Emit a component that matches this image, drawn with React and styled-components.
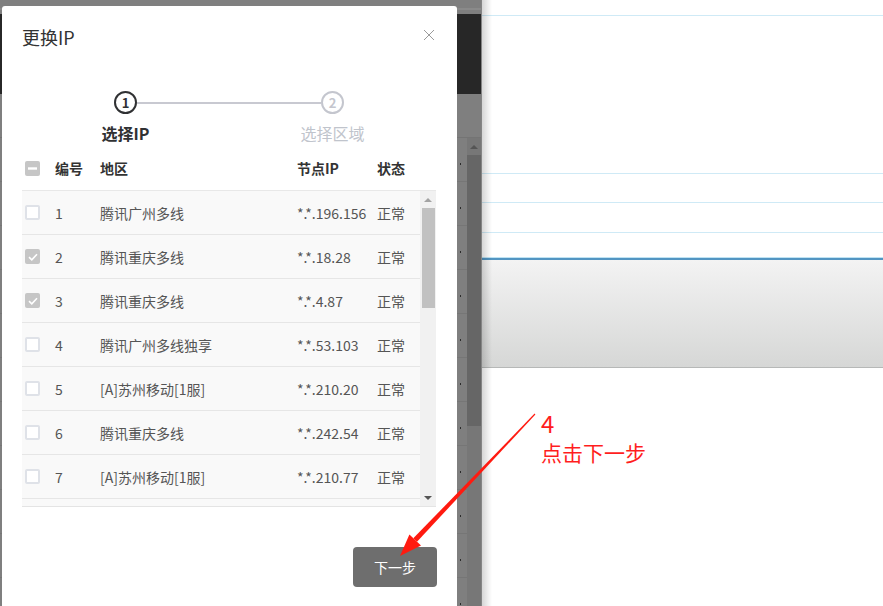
import React from "react";
import styled, { createGlobalStyle } from "styled-components";

const Global = createGlobalStyle`
  html, body { margin: 0; padding: 0; }
  body {
    font-family: "Noto Sans CJK SC", "Noto Sans", sans-serif;
    background: #ffffff;
  }
  * { box-sizing: border-box; }
`;

const Root = styled.div`
  position: relative;
  width: 883px;
  height: 606px;
  display: flex;
  overflow: hidden;
`;

/* ---------- dimmed background page (left) ---------- */
const LeftPane = styled.div`
  position: relative;
  width: 482px;
  flex: none;
  display: flex;
  flex-direction: column;
  background: #7f7f7f;
  border-right: 1px solid #858585;
`;
const BgTop = styled.div`
  flex: none;
  height: 14px;
  background: linear-gradient(#7f7f7f 0 8px, #8a8a8a 8px 10px, #7f7f7f 10px);
`;
const BgHeader = styled.div`
  flex: none;
  height: 80px;
  background: #272727;
`;
const BgToolbar = styled.div`
  flex: none;
  height: 43px;
`;
const BgTable = styled.div`
  flex: 1;
  min-height: 0;
  overflow: hidden;
  display: flex;
  border-top: 1px solid #747474;
`;
const BgRows = styled.div`
  flex: 1;
  display: flex;
  flex-direction: column;
`;
const BgRow = styled.div`
  height: 44px;
  flex: none;
  display: flex;
  align-items: center;
  justify-content: flex-end;
  border-bottom: 1px solid #767676;
`;
const BgPill = styled.div`
  width: 30px;
  height: 27px;
  margin-right: 7px;
  border-radius: 4px;
  background: #2a2a2a;
`;
const BgDot = styled.span`
  width: 1px;
  height: 2px;
  background: #2a2a2a;
  margin-right: 6px;
  margin-top: 8px;
`;
const BgScroll = styled.div`
  width: 14px;
  flex: none;
  display: flex;
  flex-direction: column;
  background: #777777;
`;
const BgScrollArrow = styled.div`
  height: 17px;
  flex: none;
  display: flex;
  align-items: center;
  justify-content: center;
  &::before {
    content: "";
    border-left: 4px solid transparent;
    border-right: 4px solid transparent;
    border-bottom: 4px solid #555;
  }
`;
const BgThumb = styled.div`
  flex: none;
  height: 271px;
  background: #666666;
`;

/* ---------- modal ---------- */
const Modal = styled.div`
  position: absolute;
  left: 2px;
  top: 6px;
  width: 455px;
  height: 620px;
  background: #ffffff;
  border-radius: 3px;
  display: flex;
  flex-direction: column;
`;
const ModalHeader = styled.div`
  display: flex;
  align-items: center;
  justify-content: space-between;
  padding: 19px 21px 0 20px;
`;
const Title = styled.div`
  font-size: 18px;
  line-height: 24px;
  color: #333;
`;
const CloseBtn = styled.button`
  width: 14px;
  height: 14px;
  padding: 0;
  border: 0;
  background: none;
  margin-top: -4px;
  display: flex;
  align-items: center;
  justify-content: center;
`;

const Steps = styled.div`
  margin: 42px 0 0 112px;
  width: 230px;
  display: grid;
  grid-template-columns: 23px 1fr 23px;
  grid-template-rows: 23px 20px;
  row-gap: 9px;
`;
const StepCircle = styled.div`
  width: 23px;
  height: 23px;
  border-radius: 50%;
  border: 2px solid ${(p) => (p.$active ? "#303133" : "#c4c6ce")};
  color: ${(p) => (p.$active ? "#303133" : "#c4c6ce")};
  font-size: 13px;
  font-weight: 700;
  line-height: 19px;
  text-align: center;
`;
const StepLine = styled.div`
  height: 2px;
  align-self: center;
  background: #c8c9d1;
`;
const StepLabel = styled.div`
  grid-column: ${(p) => p.$col};
  display: flex;
  justify-content: center;
  white-space: nowrap;
  font-size: 16px;
  line-height: 20px;
  font-weight: ${(p) => (p.$active ? 700 : 400)};
  color: ${(p) => (p.$active ? "#303133" : "#c0c4cc")};
`;

const Table = styled.div`
  margin: 3px 21px 0 20px;
  width: 414px;
`;
const cols = "33px 45px 197px 80px 1fr";
const HeadRow = styled.div`
  display: grid;
  grid-template-columns: ${cols};
  align-items: center;
  height: 44px;
  padding-right: 16px;
  font-size: 14px;
  font-weight: 700;
  color: #333;
`;
const CheckCell = styled.div`
  padding-left: 3px;
  display: flex;
  align-items: center;
`;
const Check = styled.span`
  width: 15px;
  height: 15px;
  border-radius: 2px;
  display: flex;
  align-items: center;
  justify-content: center;
  background: ${(p) => (p.$state === "off" ? "#ffffff" : "#c6c6c6")};
  border: ${(p) => (p.$state === "off" ? "2px solid #dfe2e8" : "none")};
`;
const Body = styled.div`
  display: flex;
  height: 317px;
  border-top: 1px solid #e8e8e8;
  border-bottom: 1px solid #e4e4e4;
`;
const Viewport = styled.div`
  flex: 1;
  overflow: hidden;
`;
const Row = styled.div`
  display: grid;
  grid-template-columns: ${cols};
  align-items: center;
  height: 44px;
  background: #f9f9f9;
  border-bottom: 1px solid #e6e6e6;
  font-size: 14px;
  color: #555;
`;
const Scrollbar = styled.div`
  width: 16px;
  background: #f1f1f1;
  display: flex;
  flex-direction: column;
  align-items: center;
`;
const ScrollArrow = styled.div`
  height: 17px;
  display: flex;
  align-items: center;
  justify-content: center;
  &::before {
    content: "";
    border-left: 4px solid transparent;
    border-right: 4px solid transparent;
    ${(p) => (p.$down ? "border-top: 4px solid #555;" : "border-bottom: 4px solid #a3a3a3;")}
  }
`;
const ScrollThumb = styled.div`
  width: 13px;
  height: 100px;
  background: #c1c1c1;
`;
const ScrollSpace = styled.div`
  flex: 1;
`;

const Footer = styled.div`
  display: flex;
  justify-content: flex-end;
  padding-right: 20px;
  margin-top: 40px;
`;
const NextButton = styled.button`
  width: 84px;
  height: 40px;
  border: 0;
  border-radius: 4px;
  background: #6e6e6e;
  color: #ffffff;
  font-family: inherit;
  font-size: 14px;
`;

/* ---------- right page ---------- */
const RightPane = styled.div`
  position: relative;
  flex: 1;
  display: flex;
  flex-direction: column;
  background: #ffffff;
  &::after {
    content: "";
    position: absolute;
    left: 0;
    top: 0;
    bottom: 0;
    width: 10px;
    background: linear-gradient(to right, rgba(0, 0, 0, 0.16), rgba(0, 0, 0, 0));
  }
`;
const RLine = styled.div`
  height: ${(p) => p.$h}px;
  flex: none;
  border-bottom: 1px solid #cfeaf6;
`;
const RBlue = styled.div`
  height: 27px;
  flex: none;
  border-bottom: 2px solid #5295c2;
  box-shadow: 0 -1px 0 #bfe3f3 inset;
`;
const RBand = styled.div`
  height: 108px;
  flex: none;
  background: linear-gradient(#f3f3f3, #d6d7d6);
  border-bottom: 1px solid #b6b8b7;
`;

/* ---------- annotation ---------- */
const ArrowLayer = styled.svg`
  position: absolute;
  left: 0;
  top: 0;
  pointer-events: none;
`;
const Note = styled.div`
  position: absolute;
  left: 541px;
  top: 411px;
  display: flex;
  flex-direction: column;
  gap: 7px;
  color: #ff1e1e;
  pointer-events: none;
`;
const NoteNum = styled.div`
  font-size: 24px;
  line-height: 24px;
`;
const NoteText = styled.div`
  font-size: 21px;
  line-height: 21px;
`;

const rows = [
  { n: 1, area: "腾讯广州多线", ip: "*.*.196.156", on: false },
  { n: 2, area: "腾讯重庆多线", ip: "*.*.18.28", on: true },
  { n: 3, area: "腾讯重庆多线", ip: "*.*.4.87", on: true },
  { n: 4, area: "腾讯广州多线独享", ip: "*.*.53.103", on: false },
  { n: 5, area: "[A]苏州移动[1服]", ip: "*.*.210.20", on: false },
  { n: 6, area: "腾讯重庆多线", ip: "*.*.242.54", on: false },
  { n: 7, area: "[A]苏州移动[1服]", ip: "*.*.210.77", on: false },
];

function CheckIcon() {
  return (
    <svg width="10" height="8" viewBox="0 0 10 8">
      <path d="M1 4.2 L3.8 6.8 L9 1.2" fill="none" stroke="#fff" strokeWidth="1.6" />
    </svg>
  );
}

// arrow geometry
const tail = [535, 414];
const tip = [400, 556];
const dx = tip[0] - tail[0];
const dy = tip[1] - tail[1];
const len = Math.hypot(dx, dy);
const ux = dx / len, uy = dy / len;
const nx = -uy, ny = ux;
const headLen = 22, headHalf = 8;
const base = [tip[0] - headLen * ux, tip[1] - headLen * uy];
const p = (pt) => `${pt[0].toFixed(1)},${pt[1].toFixed(1)}`;
const shaft = [
  [tail[0] + 0.6 * nx, tail[1] + 0.6 * ny],
  [base[0] + 2.6 * nx, base[1] + 2.6 * ny],
  [base[0] - 2.6 * nx, base[1] - 2.6 * ny],
  [tail[0] - 0.6 * nx, tail[1] - 0.6 * ny],
].map(p).join(" ");
const head = [
  tip,
  [base[0] + headHalf * nx, base[1] + headHalf * ny],
  [base[0] - headHalf * nx, base[1] - headHalf * ny],
].map(p).join(" ");

export default function App() {
  return (
    <Root>
      <Global />
      <LeftPane>
        <BgTop />
        <BgHeader />
        <BgToolbar />
        <BgTable>
          <BgRows>
            {Array.from({ length: 11 }).map((_, i) => (
              <BgRow key={i}>
                <BgPill />
                <BgDot />
              </BgRow>
            ))}
          </BgRows>
          <BgScroll>
            <BgScrollArrow />
            <BgThumb />
          </BgScroll>
        </BgTable>

        <Modal>
          <ModalHeader>
            <Title>更换IP</Title>
            <CloseBtn aria-label="关闭">
              <svg width="12" height="12" viewBox="0 0 12 12">
                <path d="M1 1 L11 11 M11 1 L1 11" stroke="#9a9a9a" strokeWidth="1" fill="none" />
              </svg>
            </CloseBtn>
          </ModalHeader>

          <Steps>
            <StepCircle $active>1</StepCircle>
            <StepLine />
            <StepCircle>2</StepCircle>
            <StepLabel $col={1} $active>选择IP</StepLabel>
            <StepLabel $col={3}>选择区域</StepLabel>
          </Steps>

          <Table>
            <HeadRow>
              <CheckCell>
                <Check $state="mixed">
                  <svg width="9" height="3" viewBox="0 0 9 3">
                    <rect width="9" height="2.4" y="0.3" fill="#fff" />
                  </svg>
                </Check>
              </CheckCell>
              <div>编号</div>
              <div>地区</div>
              <div>节点IP</div>
              <div>状态</div>
            </HeadRow>
            <Body>
              <Viewport>
                {rows.map((r) => (
                  <Row key={r.n}>
                    <CheckCell>
                      <Check $state={r.on ? "on" : "off"}>{r.on && <CheckIcon />}</Check>
                    </CheckCell>
                    <div>{r.n}</div>
                    <div>{r.area}</div>
                    <div>{r.ip}</div>
                    <div>正常</div>
                  </Row>
                ))}
                <Row aria-hidden="true" />
              </Viewport>
              <Scrollbar>
                <ScrollArrow />
                <ScrollThumb />
                <ScrollSpace />
                <ScrollArrow $down />
              </Scrollbar>
            </Body>
          </Table>

          <Footer>
            <NextButton>下一步</NextButton>
          </Footer>
        </Modal>
      </LeftPane>

      <RightPane>
        <RLine $h={16} />
        <RLine $h={158} />
        <RLine $h={29} />
        <RLine $h={30} />
        <RBlue />
        <RBand />
      </RightPane>

      <ArrowLayer width="883" height="606" viewBox="0 0 883 606">
        <polygon points={shaft} fill="#ff1a10" />
        <polygon points={head} fill="#ff1a10" />
      </ArrowLayer>
      <Note>
        <NoteNum>4</NoteNum>
        <NoteText>点击下一步</NoteText>
      </Note>
    </Root>
  );
}
